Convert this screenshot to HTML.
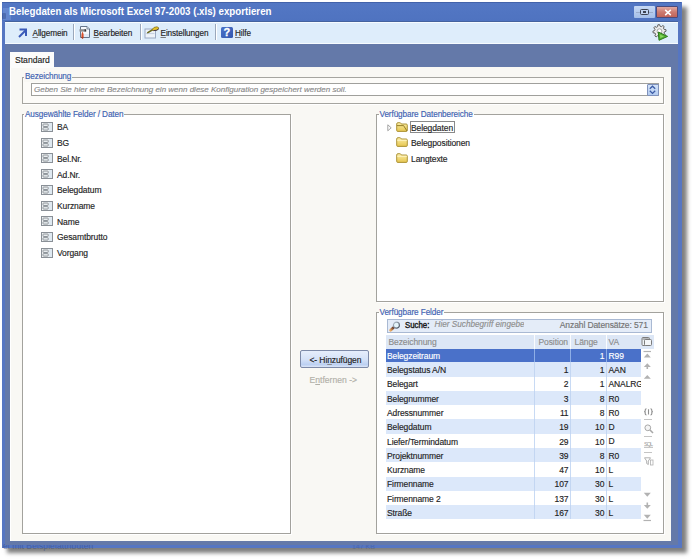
<!DOCTYPE html>
<html><head><meta charset="utf-8">
<style>
*{margin:0;padding:0;box-sizing:border-box}
html,body{width:692px;height:559px;overflow:hidden;background:#fff;position:relative;font-family:"Liberation Sans",sans-serif;}
.a{position:absolute}
.t{position:absolute;white-space:nowrap;font-size:8.5px;line-height:10px;color:#1e1e1e;-webkit-text-stroke-width:0.15px;letter-spacing:-0.1px}
#win{left:2px;top:2px;width:679.5px;height:546px;background:#5676c2;box-shadow:5px 5px 4px rgba(0,0,0,0.5)}
#title{left:9px;top:4.8px;color:#fff;font-weight:bold;font-size:10.8px;line-height:12px;transform:scaleX(0.9);transform-origin:0 0;white-space:nowrap}
#tb{left:5px;top:21px;width:673px;height:24px;background:#deedfb;border-top:1px solid #45639e;border-bottom:1px solid #56698f;box-shadow:inset 0 1px 0 #f6fbff,inset 0 -1px 0 #f6fbff}
#band{left:4.5px;top:44px;width:673.5px;height:500.5px;background:#6479a9}
#panel{left:10px;top:67px;width:661px;height:474px;background:#f9f8f4;border-left:1px solid #fff}
#tab{left:10px;top:52px;width:44px;height:16px;background:#fcfcfb}
.sep{position:absolute;top:24px;width:2px;height:16px;background:linear-gradient(90deg,#9ba8bb 50%,#fff 50%)}
.grp{position:absolute;border:1px solid #a6a5a0;background:#fcfbf8;box-shadow:1px 1px 0 #fff}
.lbl{position:absolute;white-space:nowrap;font-size:8.2px;letter-spacing:-0.1px;line-height:10px;color:#4062b2;background:#f9f8f4;padding:0 1px;-webkit-text-stroke-width:0.15px;margin-top:1.2px}
.box{position:absolute;background:#fff;border:1px solid #a3a29d;box-shadow:1px 1px 0 #fff}
</style></head><body>
<div id="win" class="a"></div>
<div class="a" style="left:2px;top:2px;width:679px;height:19px;background:linear-gradient(#4262aa 0,#4262aa 1px,#5377c4 1px,#4f73c0)"></div>
<div class="a" style="left:3px;top:8px;width:8px;height:12px;background:rgba(150,180,240,0.3)"></div>
<div class="a" style="left:2px;top:13px;width:4px;height:6px;background:rgba(40,60,120,0.35);border-radius:1px"></div>
<div id="title" class="a">Belegdaten als Microsoft Excel 97-2003 (.xls) exportieren</div>
<!-- title buttons -->
<div class="a" style="left:634px;top:6px;width:21px;height:12px;background:linear-gradient(#c6d8f4,#a4bee8);border-radius:1px"></div>
<div class="a" style="left:636px;top:11.5px;width:17px;height:1px;background:#9aaccc"></div>
<div class="a" style="left:640px;top:8.5px;width:8.5px;height:6px;border:1.3px solid #3c4250;border-radius:1.5px;background:#c0d2ee"></div>
<div class="a" style="left:642.7px;top:11px;width:3.2px;height:1.8px;background:#3c4250"></div>
<div class="a" style="left:656px;top:6px;width:21.5px;height:12px;background:linear-gradient(#e2aaa2,#cc7a70 50%,#c0645a);border:1px solid #4e4a78;border-radius:1px"></div>
<svg class="a" style="left:663.5px;top:8.5px" width="8" height="7"><path d="M1.2 0.9 L6.8 6.1 M6.8 0.9 L1.2 6.1" stroke="#fff" stroke-width="1.45"/></svg>
<div id="tb" class="a"></div>
<div class="a" style="left:3px;top:542.3px;font-size:8.5px;line-height:8px;color:#30467e;opacity:.5;white-space:nowrap;letter-spacing:0.1px;font-family:'Liberation Sans'">el mit Beispielattributen</div>
<div class="a" style="left:352px;top:542.5px;font-size:7px;line-height:8px;color:#30467e;opacity:.35;white-space:nowrap">147 KB</div>
<div id="band" class="a"></div>
<div id="panel" class="a"></div>
<div id="tab" class="a"></div>
<div class="t" style="left:15px;top:55px;font-size:8.6px;letter-spacing:0">Standard</div>

<!-- toolbar items -->
<svg class="a" style="left:17px;top:28px" width="11" height="11"><path d="M2.5 1.5 H9 V8" fill="none" stroke="#3a5ab8" stroke-width="2"/><path d="M8.5 2.5 L2 9" stroke="#3a5ab8" stroke-width="2"/></svg>
<div class="t" style="left:32.5px;top:28.6px;font-size:8.2px"><u style="text-decoration-color:#7a7a7a">A</u>llgemein</div>
<div class="sep" style="left:73px"></div>
<svg class="a" style="left:78px;top:25px" width="14" height="15"><path d="M2.5 1.5 H9 L11.5 4 V12.5 H2.5 Z" fill="#f6f9fd" stroke="#66768c"/><path d="M9 1.5 V4 H11.5" fill="#dfe6ef" stroke="#66768c" stroke-width="0.8"/><path d="M3 9 H11 V12 H3 Z" fill="#e2eaf6"/><path d="M1.5 5.4 H7.2" stroke="#8a8c90" stroke-width="2.4"/><path d="M6.6 4.2 H8.2 V6.6 H6.6 Z" fill="#303438"/><path d="M4.3 6.6 Q6.3 9 5.6 12.2 Q5.2 13.8 4.4 13.8 Q3.4 13.6 3.4 11.6 Q3.4 8.6 4.3 6.6 Z" fill="#d8502a"/><path d="M3.6 12.2 Q4.4 14 5.3 12.4" stroke="#7a2010" stroke-width="0.8" fill="none"/></svg>
<div class="t" style="left:93.5px;top:28.6px;font-size:8.2px"><u style="text-decoration-color:#7a7a7a">B</u>earbeiten</div>
<div class="sep" style="left:140px"></div>
<svg class="a" style="left:144px;top:25px" width="16" height="14"><rect x="1" y="4" width="10.5" height="9" fill="#eef3fa" stroke="#9aaac4"/><path d="M2 8.5 H10.5" stroke="#c8d2e2" stroke-width="1.2"/><path d="M3.8 7.6 L9 4.5" stroke="#6a6a20" stroke-width="1.6" stroke-linecap="round"/><path d="M8 4.8 Q9.5 1.6 13 1.8 Q15.2 2.2 14.6 4 Q13 5.8 9 5.6 Z" fill="#e4c028" stroke="#7a6a20" stroke-width="0.7"/><path d="M9.5 5.6 Q12.5 6 14.6 4" fill="none" stroke="#4a3a50" stroke-width="1"/></svg>
<div class="t" style="left:160.5px;top:28.6px;font-size:8.2px"><u style="text-decoration-color:#7a7a7a">E</u>instellungen</div>
<div class="sep" style="left:215px"></div>
<div class="a" style="left:221px;top:27px;width:11.5px;height:11px;background:linear-gradient(135deg,#4a72c8,#3558b0);border-radius:1.5px"></div>
<div class="a" style="left:222px;top:26.3px;width:9.5px;color:#fff;font-weight:bold;font-size:11px;line-height:12px;text-align:center;-webkit-text-stroke:0.3px #fff">?</div>
<div class="t" style="left:235px;top:28.6px;font-size:8.2px"><u style="text-decoration-color:#7a7a7a">H</u>ilfe</div>
<svg class="a" style="left:651.5px;top:24px" width="17" height="17"><path d="M12.03 5.32 L13.89 5.56 L14.10 7.20 L12.35 7.89 L12.03 9.08 L13.18 10.56 L12.17 11.87 L10.44 11.12 L9.38 11.73 L9.14 13.59 L7.50 13.80 L6.81 12.05 L5.62 11.73 L4.14 12.88 L2.83 11.87 L3.58 10.14 L2.97 9.08 L1.11 8.84 L0.90 7.20 L2.65 6.51 L2.97 5.32 L1.82 3.84 L2.83 2.53 L4.56 3.28 L5.62 2.67 L5.86 0.81 L7.50 0.60 L8.19 2.35 L9.38 2.67 L10.86 1.52 L12.17 2.53 L11.42 4.26 Z" fill="#ececec" stroke="#606060" stroke-width="1"/><circle cx="7.5" cy="7.2" r="2.4" fill="#fff" stroke="#909090" stroke-width="0.8"/><path d="M6.3 8 L15.6 12.4 L7 16.3 Z" fill="#52b030" stroke="#2c7a1c" stroke-width="1" stroke-linejoin="round"/><path d="M8 10.5 L12 12.4 L8.3 14" fill="#8ad860"/></svg>

<!-- Bezeichnung group -->
<div class="grp" style="left:22px;top:76.6px;width:642px;height:27.4px"></div>
<div class="lbl" style="left:24px;top:71px">Bezeichnung</div>
<div class="a" style="left:31px;top:83px;width:628px;height:13px;background:#fff;border:1px solid #a0a09c"></div>
<div class="t" style="left:34px;top:85px;color:#8a8a8a;font-style:italic;font-size:8px;letter-spacing:0">Geben Sie hier eine Bezeichnung ein wenn diese Konfiguration gespeichert werden soll.</div>
<div class="a" style="left:646.5px;top:83.5px;width:12.5px;height:12.5px;background:linear-gradient(#d2e2f8,#b4ccf0);border:1px solid #7f92bc;border-radius:1px"></div>
<svg class="a" style="left:649px;top:85px" width="7" height="10"><path d="M0.8 3.8 L3.5 1.2 L6.2 3.8 M0.8 5.8 L3.5 8.4 L6.2 5.8" fill="none" stroke="#3c5ca6" stroke-width="1.3"/></svg>

<!-- Ausgewählte Felder box -->
<div class="box" style="left:22px;top:114px;width:269px;height:420px"></div>
<div class="lbl" style="left:24px;top:109px;background:linear-gradient(#f9f8f4 3.8px,#fff 3.8px)">Ausgewählte Felder / Daten</div>

<!-- Verfügbare Datenbereiche -->
<div class="box" style="left:376px;top:114px;width:288px;height:188px"></div>
<div class="lbl" style="left:378.5px;top:109px;background:linear-gradient(#f9f8f4 3.8px,#fff 3.8px)">Verfügbare Datenbereiche</div>

<!-- Verfügbare Felder -->
<div class="box" style="left:376px;top:312px;width:288px;height:222px"></div>
<div class="lbl" style="left:378.5px;top:307px;background:linear-gradient(#f9f8f4 3.8px,#fff 3.8px)">Verfügbare Felder</div>

<!-- buttons -->
<div class="a" style="left:300px;top:350px;width:69px;height:18px;border:1px solid #7d8aa8;border-radius:2px;background:linear-gradient(#e6eefb 0%,#d4e1f7 55%,#bcd0f2 85%,#dce6f8 100%)"></div>
<div class="t" style="left:309.5px;top:354.6px">&lt;- Hi<u style="text-decoration-color:#8a8a8a">n</u>zufügen</div>
<div class="t" style="left:309.5px;top:374.5px;color:#b2b0a8;font-size:8.6px;letter-spacing:0">E<u>n</u>tfernen -&gt;</div>

<svg width="0" height="0" style="position:absolute"><defs>
<symbol id="fld" viewBox="0 0 12 10"><rect x="0.5" y="0.5" width="11" height="9" fill="#f2f4f5" stroke="#8a9097"/><rect x="7.6" y="1" width="3.4" height="8" fill="#dfe9f1"/><rect x="2" y="2" width="5.2" height="2.5" rx="0.6" fill="#e9edef" stroke="#838a91" stroke-width="0.9"/><rect x="2" y="5.6" width="5.2" height="2.5" rx="0.6" fill="#e9edef" stroke="#838a91" stroke-width="0.9"/></symbol>
<linearGradient id="fg" x1="0" y1="0" x2="0" y2="1"><stop offset="0" stop-color="#fbeea8"/><stop offset="1" stop-color="#e6c650"/></linearGradient>
<symbol id="fold" viewBox="0 0 12 10"><path d="M0.7 2 Q0.7 0.7 1.9 0.7 H3.9 Q4.6 0.7 5 1.4 L5.3 2 H10.2 Q11.3 2 11.3 3.1 V8.4 Q11.3 9.4 10.3 9.4 H1.7 Q0.7 9.4 0.7 8.4 Z" fill="url(#fg)" stroke="#a48a2a" stroke-width="0.9"/><path d="M1.2 3.3 H10.8" stroke="#fff6c8" stroke-width="0.9"/></symbol>
<symbol id="foldo" viewBox="0 0 12 10"><path d="M0.7 2 Q0.7 0.7 1.9 0.7 H3.9 Q4.6 0.7 5 1.4 L5.3 2 H10.2 Q11.3 2 11.3 3.1 V8.4 Q11.3 9.4 10.3 9.4 H1.7 Q0.7 9.4 0.7 8.4 Z" fill="url(#fg)" stroke="#a48a2a" stroke-width="0.9"/><path d="M0.9 3.6 H7.6 L10.9 8.9" fill="none" stroke="#8a7420" stroke-width="0.9"/></symbol>
</defs></svg>
<!-- left list -->
<svg class="a" style="left:41px;top:122.0px" width="12" height="10"><use href="#fld"/></svg><div class="t" style="left:57px;top:122.4px">BA</div>
<svg class="a" style="left:41px;top:137.7px" width="12" height="10"><use href="#fld"/></svg><div class="t" style="left:57px;top:138.1px">BG</div>
<svg class="a" style="left:41px;top:153.4px" width="12" height="10"><use href="#fld"/></svg><div class="t" style="left:57px;top:153.8px">Bel.Nr.</div>
<svg class="a" style="left:41px;top:169.1px" width="12" height="10"><use href="#fld"/></svg><div class="t" style="left:57px;top:169.5px">Ad.Nr.</div>
<svg class="a" style="left:41px;top:184.8px" width="12" height="10"><use href="#fld"/></svg><div class="t" style="left:57px;top:185.2px">Belegdatum</div>
<svg class="a" style="left:41px;top:200.5px" width="12" height="10"><use href="#fld"/></svg><div class="t" style="left:57px;top:200.9px">Kurzname</div>
<svg class="a" style="left:41px;top:216.2px" width="12" height="10"><use href="#fld"/></svg><div class="t" style="left:57px;top:216.6px">Name</div>
<svg class="a" style="left:41px;top:231.9px" width="12" height="10"><use href="#fld"/></svg><div class="t" style="left:57px;top:232.3px">Gesamtbrutto</div>
<svg class="a" style="left:41px;top:247.6px" width="12" height="10"><use href="#fld"/></svg><div class="t" style="left:57px;top:248.0px">Vorgang</div>
<!-- tree -->
<svg class="a" style="left:386.5px;top:123.5px" width="5" height="8"><path d="M0.8 0.8 L4.2 3.8 L0.8 6.8 Z" fill="none" stroke="#9a9a9a" stroke-width="0.9"/></svg>
<div class="a" style="left:410px;top:121px;width:45px;height:12px;border:1px solid #8a8a8a"></div>
<svg class="a" style="left:395.5px;top:121.5px" width="12" height="10"><use href="#foldo"/></svg><div class="t" style="left:411px;top:122.6px">Belegdaten</div>
<svg class="a" style="left:395.8px;top:137.2px" width="12" height="10"><use href="#fold"/></svg><div class="t" style="left:411px;top:138.1px">Belegpositionen</div>
<svg class="a" style="left:395.8px;top:152.9px" width="12" height="10"><use href="#fold"/></svg><div class="t" style="left:411px;top:153.6px">Langtexte</div>
<!-- search -->
<div class="a" style="left:387px;top:319px;width:265px;height:14px;background:#e4ecf8;border:1px solid #a9b9d3"></div>
<svg class="a" style="left:389px;top:320.5px" width="12" height="11"><defs><linearGradient id="hg" x1="0" y1="1" x2="1" y2="0"><stop offset="0" stop-color="#e8a860"/><stop offset="1" stop-color="#6a3a28"/></linearGradient><linearGradient id="rg" x1="0" y1="0" x2="1" y2="1"><stop offset="0" stop-color="#b8c4d0"/><stop offset="1" stop-color="#404a58"/></linearGradient></defs><path d="M1.6 9.3 L4.3 6.7" stroke="url(#hg)" stroke-width="2.6" stroke-linecap="round"/><circle cx="7.4" cy="4.2" r="3" fill="#e4f4fa" stroke="url(#rg)" stroke-width="1.2"/></svg>
<div class="t" style="left:405px;top:320.2px;font-size:8.6px;color:#1a1a1a;-webkit-text-stroke-width:0.4px;letter-spacing:0;transform:scaleX(0.91);transform-origin:0 0">Suche:</div>
<div class="a" style="left:434px;top:320px;width:90px;height:12px;overflow:hidden"><div class="t" style="left:0.5px;top:0.3px;font-style:italic;color:#8e8e8e;font-size:8.2px;letter-spacing:0">Hier Suchbegriff eingeben</div></div>
<div class="t" style="left:559.8px;top:320.3px;color:#727272">Anzahl Datensätze: 571</div>
<!-- header -->
<div class="a" style="left:386px;top:335px;width:267.7px;height:14px;background:#dde7f6"></div>
<div class="a" style="left:534px;top:335px;width:1px;height:14px;background:#fbfcfe"></div>
<div class="a" style="left:570px;top:335px;width:1px;height:14px;background:#fbfcfe"></div>
<div class="a" style="left:606px;top:335px;width:1px;height:14px;background:#fbfcfe"></div>
<div class="t" style="left:388.5px;top:336.8px;color:#8c8c8c">Bezeichnung</div>
<div class="t" style="left:538.5px;top:336.8px;color:#8c8c8c">Position</div>
<div class="t" style="left:574.5px;top:336.8px;color:#8c8c8c">Länge</div>
<div class="t" style="left:608.5px;top:336.8px;color:#8c8c8c">VA</div>
<!-- rows -->
<div class="a" style="left:386.3px;top:348.90px;width:254.7px;height:13.40px;background:#4a71c9"></div>
<div class="a" style="left:534px;top:348.90px;width:1px;height:13.40px;background:#8eaee6"></div>
<div class="a" style="left:570px;top:348.90px;width:1px;height:13.40px;background:#8eaee6"></div>
<div class="a" style="left:606px;top:348.90px;width:1px;height:13.40px;background:#8eaee6"></div>
<div class="t" style="left:387px;top:350.70px;color:#fff">Belegzeitraum</div>
<div class="t" style="left:540px;width:64.3px;text-align:right;top:350.70px;color:#fff">1</div>
<div class="a" style="left:607.5px;top:348.90px;width:33.5px;height:13.40px;overflow:hidden"><div class="t" style="left:1px;top:1.80px;color:#fff">R99</div></div>
<div class="a" style="left:386.3px;top:362.30px;width:254.7px;height:14.28px;background:#dce8fa"></div>
<div class="a" style="left:534px;top:362.30px;width:1px;height:14.28px;background:#c3d6f2"></div>
<div class="a" style="left:570px;top:362.30px;width:1px;height:14.28px;background:#c3d6f2"></div>
<div class="a" style="left:606px;top:362.30px;width:1px;height:14.28px;background:#c3d6f2"></div>
<div class="t" style="left:387px;top:365.10px;color:#1e1e1e">Belegstatus A/N</div>
<div class="t" style="left:500px;width:68.5px;text-align:right;top:365.10px;color:#1e1e1e">1</div>
<div class="t" style="left:540px;width:64.3px;text-align:right;top:365.10px;color:#1e1e1e">1</div>
<div class="a" style="left:607.5px;top:362.30px;width:33.5px;height:14.28px;overflow:hidden"><div class="t" style="left:1px;top:2.80px;color:#1e1e1e">AAN</div></div>
<div class="a" style="left:386.3px;top:376.58px;width:254.7px;height:14.28px;background:#ffffff"></div>
<div class="a" style="left:534px;top:376.58px;width:1px;height:14.28px;background:#c8daf4"></div>
<div class="a" style="left:570px;top:376.58px;width:1px;height:14.28px;background:#c8daf4"></div>
<div class="a" style="left:606px;top:376.58px;width:1px;height:14.28px;background:#c8daf4"></div>
<div class="t" style="left:387px;top:379.38px;color:#1e1e1e">Belegart</div>
<div class="t" style="left:500px;width:68.5px;text-align:right;top:379.38px;color:#1e1e1e">2</div>
<div class="t" style="left:540px;width:64.3px;text-align:right;top:379.38px;color:#1e1e1e">1</div>
<div class="a" style="left:607.5px;top:376.58px;width:33.5px;height:14.28px;overflow:hidden"><div class="t" style="left:1px;top:2.80px;color:#1e1e1e">ANALRGl</div></div>
<div class="a" style="left:386.3px;top:390.86px;width:254.7px;height:14.28px;background:#dce8fa"></div>
<div class="a" style="left:534px;top:390.86px;width:1px;height:14.28px;background:#c3d6f2"></div>
<div class="a" style="left:570px;top:390.86px;width:1px;height:14.28px;background:#c3d6f2"></div>
<div class="a" style="left:606px;top:390.86px;width:1px;height:14.28px;background:#c3d6f2"></div>
<div class="t" style="left:387px;top:393.66px;color:#1e1e1e">Belegnummer</div>
<div class="t" style="left:500px;width:68.5px;text-align:right;top:393.66px;color:#1e1e1e">3</div>
<div class="t" style="left:540px;width:64.3px;text-align:right;top:393.66px;color:#1e1e1e">8</div>
<div class="a" style="left:607.5px;top:390.86px;width:33.5px;height:14.28px;overflow:hidden"><div class="t" style="left:1px;top:2.80px;color:#1e1e1e">R0</div></div>
<div class="a" style="left:386.3px;top:405.14px;width:254.7px;height:14.28px;background:#ffffff"></div>
<div class="a" style="left:534px;top:405.14px;width:1px;height:14.28px;background:#c8daf4"></div>
<div class="a" style="left:570px;top:405.14px;width:1px;height:14.28px;background:#c8daf4"></div>
<div class="a" style="left:606px;top:405.14px;width:1px;height:14.28px;background:#c8daf4"></div>
<div class="t" style="left:387px;top:407.94px;color:#1e1e1e">Adressnummer</div>
<div class="t" style="left:500px;width:68.5px;text-align:right;top:407.94px;color:#1e1e1e">11</div>
<div class="t" style="left:540px;width:64.3px;text-align:right;top:407.94px;color:#1e1e1e">8</div>
<div class="a" style="left:607.5px;top:405.14px;width:33.5px;height:14.28px;overflow:hidden"><div class="t" style="left:1px;top:2.80px;color:#1e1e1e">R0</div></div>
<div class="a" style="left:386.3px;top:419.42px;width:254.7px;height:14.28px;background:#dce8fa"></div>
<div class="a" style="left:534px;top:419.42px;width:1px;height:14.28px;background:#c3d6f2"></div>
<div class="a" style="left:570px;top:419.42px;width:1px;height:14.28px;background:#c3d6f2"></div>
<div class="a" style="left:606px;top:419.42px;width:1px;height:14.28px;background:#c3d6f2"></div>
<div class="t" style="left:387px;top:422.22px;color:#1e1e1e">Belegdatum</div>
<div class="t" style="left:500px;width:68.5px;text-align:right;top:422.22px;color:#1e1e1e">19</div>
<div class="t" style="left:540px;width:64.3px;text-align:right;top:422.22px;color:#1e1e1e">10</div>
<div class="a" style="left:607.5px;top:419.42px;width:33.5px;height:14.28px;overflow:hidden"><div class="t" style="left:1px;top:2.80px;color:#1e1e1e">D</div></div>
<div class="a" style="left:386.3px;top:433.70px;width:254.7px;height:14.28px;background:#ffffff"></div>
<div class="a" style="left:534px;top:433.70px;width:1px;height:14.28px;background:#c8daf4"></div>
<div class="a" style="left:570px;top:433.70px;width:1px;height:14.28px;background:#c8daf4"></div>
<div class="a" style="left:606px;top:433.70px;width:1px;height:14.28px;background:#c8daf4"></div>
<div class="t" style="left:387px;top:436.50px;color:#1e1e1e">Liefer/Termindatum</div>
<div class="t" style="left:500px;width:68.5px;text-align:right;top:436.50px;color:#1e1e1e">29</div>
<div class="t" style="left:540px;width:64.3px;text-align:right;top:436.50px;color:#1e1e1e">10</div>
<div class="a" style="left:607.5px;top:433.70px;width:33.5px;height:14.28px;overflow:hidden"><div class="t" style="left:1px;top:2.80px;color:#1e1e1e">D</div></div>
<div class="a" style="left:386.3px;top:447.98px;width:254.7px;height:14.28px;background:#dce8fa"></div>
<div class="a" style="left:534px;top:447.98px;width:1px;height:14.28px;background:#c3d6f2"></div>
<div class="a" style="left:570px;top:447.98px;width:1px;height:14.28px;background:#c3d6f2"></div>
<div class="a" style="left:606px;top:447.98px;width:1px;height:14.28px;background:#c3d6f2"></div>
<div class="t" style="left:387px;top:450.78px;color:#1e1e1e">Projektnummer</div>
<div class="t" style="left:500px;width:68.5px;text-align:right;top:450.78px;color:#1e1e1e">39</div>
<div class="t" style="left:540px;width:64.3px;text-align:right;top:450.78px;color:#1e1e1e">8</div>
<div class="a" style="left:607.5px;top:447.98px;width:33.5px;height:14.28px;overflow:hidden"><div class="t" style="left:1px;top:2.80px;color:#1e1e1e">R0</div></div>
<div class="a" style="left:386.3px;top:462.26px;width:254.7px;height:14.28px;background:#ffffff"></div>
<div class="a" style="left:534px;top:462.26px;width:1px;height:14.28px;background:#c8daf4"></div>
<div class="a" style="left:570px;top:462.26px;width:1px;height:14.28px;background:#c8daf4"></div>
<div class="a" style="left:606px;top:462.26px;width:1px;height:14.28px;background:#c8daf4"></div>
<div class="t" style="left:387px;top:465.06px;color:#1e1e1e">Kurzname</div>
<div class="t" style="left:500px;width:68.5px;text-align:right;top:465.06px;color:#1e1e1e">47</div>
<div class="t" style="left:540px;width:64.3px;text-align:right;top:465.06px;color:#1e1e1e">10</div>
<div class="a" style="left:607.5px;top:462.26px;width:33.5px;height:14.28px;overflow:hidden"><div class="t" style="left:1px;top:2.80px;color:#1e1e1e">L</div></div>
<div class="a" style="left:386.3px;top:476.54px;width:254.7px;height:14.28px;background:#dce8fa"></div>
<div class="a" style="left:534px;top:476.54px;width:1px;height:14.28px;background:#c3d6f2"></div>
<div class="a" style="left:570px;top:476.54px;width:1px;height:14.28px;background:#c3d6f2"></div>
<div class="a" style="left:606px;top:476.54px;width:1px;height:14.28px;background:#c3d6f2"></div>
<div class="t" style="left:387px;top:479.34px;color:#1e1e1e">Firmenname</div>
<div class="t" style="left:500px;width:68.5px;text-align:right;top:479.34px;color:#1e1e1e">107</div>
<div class="t" style="left:540px;width:64.3px;text-align:right;top:479.34px;color:#1e1e1e">30</div>
<div class="a" style="left:607.5px;top:476.54px;width:33.5px;height:14.28px;overflow:hidden"><div class="t" style="left:1px;top:2.80px;color:#1e1e1e">L</div></div>
<div class="a" style="left:386.3px;top:490.82px;width:254.7px;height:14.28px;background:#ffffff"></div>
<div class="a" style="left:534px;top:490.82px;width:1px;height:14.28px;background:#c8daf4"></div>
<div class="a" style="left:570px;top:490.82px;width:1px;height:14.28px;background:#c8daf4"></div>
<div class="a" style="left:606px;top:490.82px;width:1px;height:14.28px;background:#c8daf4"></div>
<div class="t" style="left:387px;top:493.62px;color:#1e1e1e">Firmenname 2</div>
<div class="t" style="left:500px;width:68.5px;text-align:right;top:493.62px;color:#1e1e1e">137</div>
<div class="t" style="left:540px;width:64.3px;text-align:right;top:493.62px;color:#1e1e1e">30</div>
<div class="a" style="left:607.5px;top:490.82px;width:33.5px;height:14.28px;overflow:hidden"><div class="t" style="left:1px;top:2.80px;color:#1e1e1e">L</div></div>
<div class="a" style="left:386.3px;top:505.10px;width:254.7px;height:14.28px;background:#dce8fa"></div>
<div class="a" style="left:534px;top:505.10px;width:1px;height:14.28px;background:#c3d6f2"></div>
<div class="a" style="left:570px;top:505.10px;width:1px;height:14.28px;background:#c3d6f2"></div>
<div class="a" style="left:606px;top:505.10px;width:1px;height:14.28px;background:#c3d6f2"></div>
<div class="t" style="left:387px;top:507.90px;color:#1e1e1e">Straße</div>
<div class="t" style="left:500px;width:68.5px;text-align:right;top:507.90px;color:#1e1e1e">167</div>
<div class="t" style="left:540px;width:64.3px;text-align:right;top:507.90px;color:#1e1e1e">30</div>
<div class="a" style="left:607.5px;top:505.10px;width:33.5px;height:14.28px;overflow:hidden"><div class="t" style="left:1px;top:2.80px;color:#1e1e1e">L</div></div>
<!-- side icons -->
<svg class="a" style="left:641px;top:336px" width="12" height="11"><rect x="1" y="1.5" width="7.5" height="8" rx="1" fill="#eef2f6" stroke="#7c7c7c"/><rect x="3.5" y="3.5" width="7" height="6" rx="1" fill="#f4f6f8" stroke="#7c7c7c"/><path d="M1.5 3 H8" stroke="#7c7c7c"/></svg>
<svg class="a" style="left:643px;top:350px" width="9" height="9"><path d="M0.5 1.5 H8" stroke="#b2b2b2" stroke-width="1.2"/><path d="M0.8 7.5 L4.3 3.5 L7.8 7.5 Z" fill="#b2b2b2"/></svg>
<svg class="a" style="left:643px;top:362px" width="9" height="8"><path d="M0.8 5 L4.3 1.2 L7.8 5 Z" fill="#b2b2b2"/><path d="M4.3 4 V7" stroke="#b2b2b2" stroke-width="1.6"/></svg>
<svg class="a" style="left:643px;top:374px" width="9" height="6"><path d="M0.8 4.8 L4.3 1 L7.8 4.8 Z" fill="#b2b2b2"/></svg>
<svg class="a" style="left:643.5px;top:407.5px" width="9" height="8"><path d="M2.5 0.8 Q1.2 0.8 1.2 2 V3.2 L0.5 3.8 L1.2 4.4 V5.8 Q1.2 7 2.5 7 M6.5 0.8 Q7.8 0.8 7.8 2 V3.2 L8.5 3.8 L7.8 4.4 V5.8 Q7.8 7 6.5 7 M4.5 1.2 V6.6" fill="none" stroke="#8e8e8e" stroke-width="1.1"/></svg>
<div class="a" style="left:644px;top:419px;width:8px;height:1px;background:#c4c4c4"></div>
<svg class="a" style="left:643.5px;top:423.5px" width="10" height="10"><circle cx="3.8" cy="3.8" r="2.9" fill="#f4f4f4" stroke="#a8a8a8" stroke-width="1"/><path d="M6 6 L9 9" stroke="#a8a8a8" stroke-width="1.6"/></svg>
<div class="a" style="left:644px;top:436px;width:8px;height:1px;background:#c4c4c4"></div>
<svg class="a" style="left:643.5px;top:441px" width="10" height="7"><text x="0" y="5.3" font-family="Liberation Sans" font-size="5.5" fill="#9a9a9a" textLength="9">SQL</text><path d="M0 6.3 H9" stroke="#9a9a9a" stroke-width="0.7"/></svg>
<div class="a" style="left:644px;top:452px;width:8px;height:1px;background:#c4c4c4"></div>
<svg class="a" style="left:643.5px;top:457px" width="10" height="9"><path d="M0.5 0.8 H6.5 L4.3 4 V7.5 L2.7 6.5 V4 Z" fill="none" stroke="#a8a8a8" stroke-width="0.9"/><rect x="6.5" y="3" width="2.5" height="5" fill="none" stroke="#b0b0b0" stroke-width="0.8"/></svg>
<svg class="a" style="left:643px;top:492px" width="9" height="6"><path d="M0.8 0.8 L4.3 4.8 L7.8 0.8 Z" fill="#b2b2b2"/></svg>
<svg class="a" style="left:643px;top:502px" width="9" height="8"><path d="M4.3 0.5 V3.5" stroke="#b2b2b2" stroke-width="1.6"/><path d="M0.8 3 L4.3 6.8 L7.8 3 Z" fill="#b2b2b2"/></svg>
<svg class="a" style="left:643px;top:513.5px" width="9" height="8"><path d="M0.8 0.8 L4.3 4.8 L7.8 0.8 Z" fill="#b2b2b2"/><path d="M0.5 6.5 H8" stroke="#b2b2b2" stroke-width="1.2"/></svg>
</body></html>
